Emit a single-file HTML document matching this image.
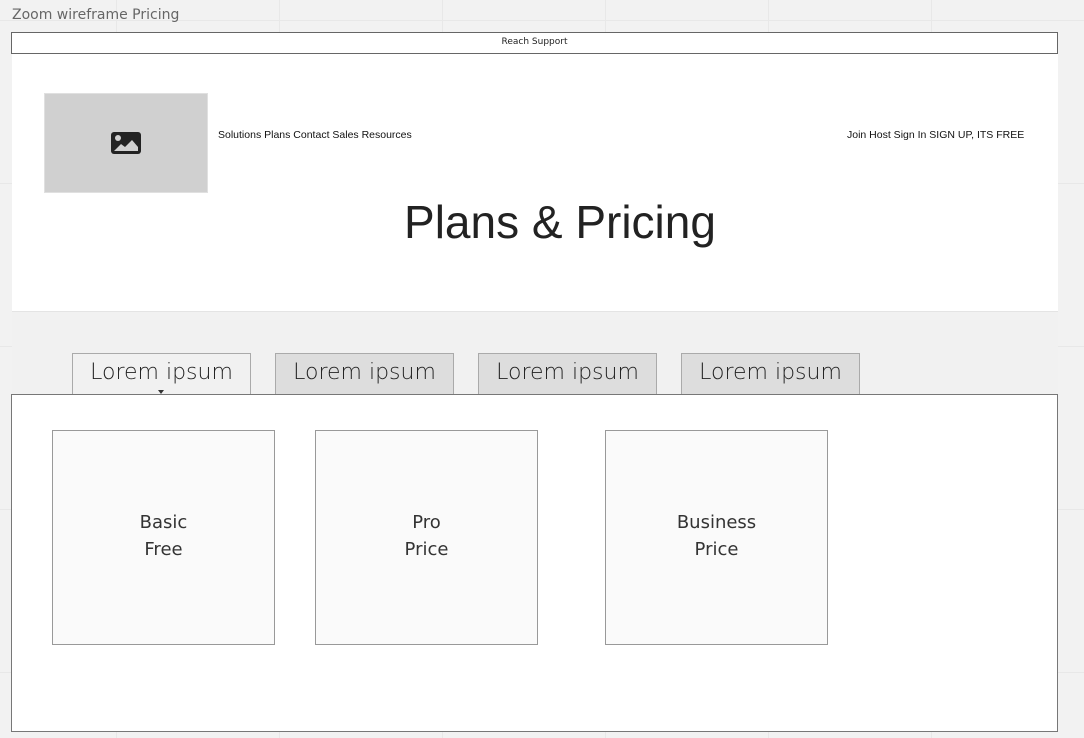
<!DOCTYPE html>
<html><head><style>
body{margin:0;width:1084px;height:738px;background:#f2f2f2;position:relative;overflow:hidden;font-family:"Liberation Sans",sans-serif;
background-image:linear-gradient(#e8e8e8 1px,transparent 1px),linear-gradient(90deg,#e8e8e8 1px,transparent 1px);background-size:163px 163px;background-position:-47px 20px}
div{position:absolute;box-sizing:border-box}
.t{font-family:"DejaVu Sans",sans-serif;color:#333}
.tab{top:353px;width:179px;height:42px;border:1px solid #aaa;background:#ddd;font-size:22px;text-align:center;line-height:38px;color:#222;font-family:"DejaVu Sans",sans-serif;font-weight:300}
.card{top:430px;width:223px;height:215px;border:1px solid #999;background:#fafafa;text-align:center;font-family:"DejaVu Sans",sans-serif;font-size:18px;line-height:27px;color:#333;padding-top:78px}
</style></head><body>
<div class="t" style="left:12px;top:7px;font-size:14px;color:#666">Zoom wireframe Pricing</div>
<div style="left:12px;top:53px;width:1046px;height:258px;background:#fff"></div>
<div style="left:12px;top:311px;width:1046px;height:84px;background:#f1f1f1;border-top:1px solid #e4e4e4"></div>
<div style="left:11px;top:32px;width:1047px;height:22px;border:1px solid #666;background:#fff;font-size:9px;text-align:center;line-height:19px;color:#222;font-family:'DejaVu Sans',sans-serif">Reach Support</div>
<div style="left:44px;top:93px;width:164px;height:100px;background:#d0d0d0;border:1px solid #e0e0e0"></div>
<svg style="position:absolute;left:110px;top:131px" width="32" height="24" viewBox="0 0 32 24"><rect x="1" y="1" width="30" height="22" rx="3" fill="#222"/><circle cx="8" cy="7" r="3" fill="#d0d0d0"/><path d="M4 20 L11 13 L15 16 L22 9 L28 16 L28 20 Z" fill="#d0d0d0"/></svg>
<div style="left:218px;top:129px;font-size:10.5px;color:#111">Solutions Plans Contact Sales Resources</div>
<div style="left:847px;top:129px;font-size:10.5px;color:#111">Join Host Sign In SIGN UP, ITS FREE</div>
<div style="left:0;width:1120px;top:195px;text-align:center;font-size:46px;color:#222">Plans &amp; Pricing</div>
<div class="tab" style="left:72px;background:#f1f1f1">Lorem ipsum</div>
<div class="tab" style="left:275px">Lorem ipsum</div>
<div class="tab" style="left:478px">Lorem ipsum</div>
<div class="tab" style="left:681px">Lorem ipsum</div>
<div style="left:11px;top:394px;width:1047px;height:338px;border:1px solid #777;background:#fff"></div>
<div style="left:158px;top:390px;width:0;height:0;border-left:3px solid transparent;border-right:3px solid transparent;border-top:4px solid #333"></div>
<div class="card" style="left:52px">Basic<br>Free</div>
<div class="card" style="left:315px">Pro<br>Price</div>
<div class="card" style="left:605px">Business<br>Price</div>
</body></html>
